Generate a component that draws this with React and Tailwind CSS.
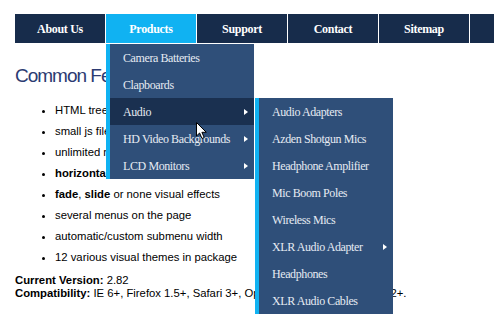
import React from 'react';

const navItems = ['About Us', 'Products', 'Support', 'Contact', 'Sitemap', 'Help'];

const productItems = [
  { label: 'Camera Batteries' },
  { label: 'Clapboards' },
  { label: 'Audio', sub: true, active: true },
  { label: 'HD Video Backgrounds', sub: true },
  { label: 'LCD Monitors', sub: true },
];

const audioItems = [
  { label: 'Audio Adapters' },
  { label: 'Azden Shotgun Mics' },
  { label: 'Headphone Amplifier' },
  { label: 'Mic Boom Poles' },
  { label: 'Wireless Mics' },
  { label: 'XLR Audio Adapter', sub: true },
  { label: 'Headphones' },
  { label: 'XLR Audio Cables' },
];

const features = [
  <>HTML tree</>,
  <>small js file</>,
  <>unlimited menu levels</>,
  <><b>horizontal</b>/<b>vertical</b> menus</>,
  <><b>fade</b>, <b>slide</b> or none visual effects</>,
  <>several menus on the page</>,
  <>automatic/custom submenu width</>,
  <>12 various visual themes in package</>,
];

const Arrow = () => (
  <span className="w-0 h-0 border-y-[3px] border-y-transparent border-l-[4px] border-l-white"></span>
);

const MenuRow = ({ item }) => (
  <div
    className={`h-[27px] flex items-center justify-between pl-[13px] pr-[6px] text-[12px] font-normal tracking-[-0.4px] text-[#e6ebf3] ${
      item.active ? 'bg-[#1a3050]' : ''
    }`}
  >
    <span>{item.label}</span>
    {item.sub && <Arrow />}
  </div>
);

const Cursor = () => (
  <svg className="absolute left-[86px] top-[78px]" width="12" height="18" viewBox="0 0 12 18">
    <path d="M0.5 0.5 L0.5 14 L3.6 11 L6 16.5 L8.2 15.5 L5.9 10.3 L10.3 10.3 Z" fill="#fff" stroke="#000" strokeWidth="1" strokeLinejoin="round" />
  </svg>
);

export default function App() {
  return (
    <div className="w-[494px] h-[321px] overflow-hidden bg-white pt-[14px] pl-[15px] font-['Liberation_Sans',Arial,sans-serif] text-black">
      <nav className="flex gap-px h-[29px] w-max relative z-10 font-['Liberation_Serif','Times_New_Roman',serif]">
        {navItems.map((label) => {
          const active = label === 'Products';
          return (
            <div
              key={label}
              className={`relative w-[90px] flex items-center justify-center text-[12px] font-bold tracking-[-0.3px] text-white ${
                active ? 'bg-[#10b2f2]' : 'bg-[#172c4b]'
              }`}
            >
              {label}
              {active && (
                <div className="absolute left-0 top-[30px] w-[148px] border-l-4 border-[#10b2f2] bg-[#2f4f79]">
                  {productItems.map((item) => (
                    <MenuRow key={item.label} item={item} />
                  ))}
                  <Cursor />
                  <div className="absolute left-[145px] top-[54px] w-[138px] border-l-4 border-[#10b2f2] bg-[#2f4f79]">
                    {audioItems.map((item) => (
                      <MenuRow key={item.label} item={item} />
                    ))}
                  </div>
                </div>
              )}
            </div>
          );
        })}
      </nav>

      <h1 className="mt-[22px] text-[19px] leading-[22px] tracking-[-1px] text-[#2c3b72]">Common Features</h1>

      <ul className="mt-[13px] pl-[40px] list-disc text-[11.3px] leading-[21px]">
        {features.map((f, i) => (
          <li key={i}>{f}</li>
        ))}
      </ul>

      <div className="mt-[6px] text-[11.3px] leading-[13px]">
        <div>
          <b>Current Version:</b> 2.82
        </div>
        <div>
          <b>Compatibility:</b> IE 6+, Firefox 1.5+, Safari 3+, Opera 9.5+, Google Chrome 2+.
        </div>
      </div>
    </div>
  );
}
